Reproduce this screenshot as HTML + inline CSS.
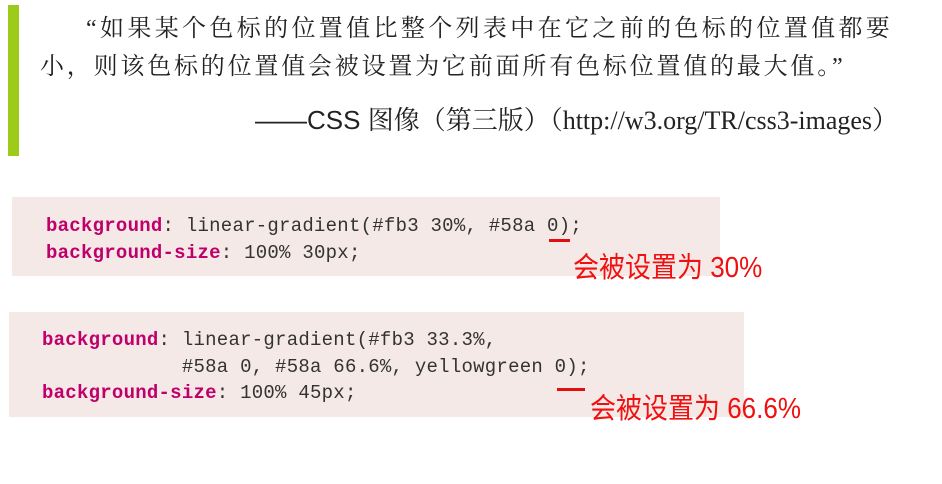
<!DOCTYPE html><html><head><meta charset="utf-8"><style>
body{margin:0;width:942px;height:484px;background:#fff;position:relative;overflow:hidden}
.a{position:absolute;white-space:pre}
.q{font-family:"Liberation Serif","Noto Serif CJK SC",serif;font-size:24px;color:#222}
.box{position:absolute;background:#f5e9e7}
.c{font-family:"Liberation Mono",monospace;font-size:19px;color:#333;line-height:26.5px;letter-spacing:0.25px}
.k{color:#c0006a;font-weight:bold}
.r{color:#f01010;font-family:"Liberation Sans","Noto Sans CJK SC",sans-serif;font-size:26px;transform:scaleY(1.1);transform-origin:left top}
.u{position:absolute;background:#e01010;height:3px}
</style></head><body>
<div style="position:absolute;left:8px;top:5px;width:11px;height:151px;background:#9ccc19"></div>
<div class="a q" style="left:86px;top:8px;letter-spacing:3.35px">“如果某个色标的位置值比整个列表中在它之前的色标的位置值都要</div>
<div class="a q" style="left:40px;top:46px;letter-spacing:2.8px">小，则该色标的位置值会被设置为它前面所有色标位置值的最大值。”</div>
<div class="a q" style="left:255px;top:100px;font-size:26px"><span style="font-family:'Liberation Sans',sans-serif">——CSS </span>图像（第三版）（http://w3.org/TR/css3-images）</div>
<div class="box" style="left:12px;top:197px;width:708px;height:79px"></div>
<div class="a c" style="left:46px;top:213px"><span class="k">background</span>: linear-gradient(#fb3 30%, #58a 0);
<span class="k">background-size</span>: 100% 30px;</div>
<div class="u" style="left:549px;top:239px;width:21px"></div>
<div class="a r" style="left:573px;top:245px">会被设置为 30%</div>
<div class="box" style="left:9px;top:312px;width:735px;height:105px"></div>
<div class="a c" style="left:42px;top:327px"><span class="k">background</span>: linear-gradient(#fb3 33.3%,
            #58a 0, #58a 66.6%, yellowgreen 0);
<span class="k">background-size</span>: 100% 45px;</div>
<div class="u" style="left:557px;top:388px;width:28px"></div>
<div class="a r" style="left:590px;top:386px">会被设置为 66.6%</div>
</body></html>
